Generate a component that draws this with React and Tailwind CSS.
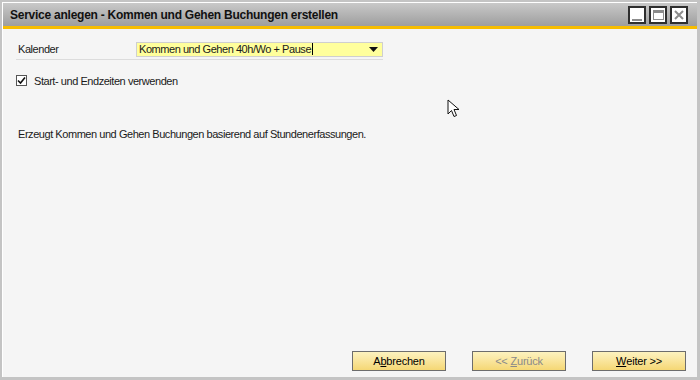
import React from "react";

const font = { fontFamily: '"Liberation Sans", Arial, sans-serif' };

function WinButton({ children }) {
	return (
		<div className="flex h-[18px] w-[18px] items-center justify-center border-2 border-[#2e2e2e] bg-white">
			{children}
		</div>
	);
}

function Button({ children, disabled }) {
	return (
		<button
			type="button"
			className={
				"flex h-[20px] w-[94px] items-center justify-center border border-[#6d6d6d] bg-gradient-to-b from-[#fdf2bf] to-[#f5d774] text-[11px] tracking-[-0.2px] " +
				(disabled ? "text-[#8a8a8a]" : "text-black")
			}>
			{children}
		</button>
	);
}

export default function App() {
	return (
		<div
			className="flex h-[380px] w-[700px] flex-col border-t-2 border-l-2 border-r-[3px] border-b-[3px] border-[#c4c4c4] bg-white"
			style={font}>
			<div className="flex min-h-0 flex-1 flex-col border-t border-l border-white">
				<div className="flex h-[23px] items-center justify-between bg-gradient-to-b from-[#c9c9c9] to-[#9e9e9e] pl-[7px] pr-[9px]">
					<span className="text-[12px] font-bold tracking-[-0.25px] text-[#111]">
						Service anlegen - Kommen und Gehen Buchungen erstellen
					</span>
					<div className="flex gap-[3px] pt-[1px]">
						<WinButton>
							<div className="mt-[9px] h-[2px] w-[10px] bg-[#8c8c8c]" />
						</WinButton>
						<WinButton>
							<div className="h-[10px] w-[11px] border border-t-[3px] border-[#8c8c8c]" />
						</WinButton>
						<WinButton>
							<svg width="10" height="10" viewBox="0 0 10 10">
								<path d="M1 1 L9 9 M9 1 L1 9" stroke="#8c8c8c" strokeWidth="2" />
							</svg>
						</WinButton>
					</div>
				</div>
				<div className="h-[3px] bg-[#f7bd00]" />
				<div className="relative flex min-h-0 flex-1 flex-col bg-[#f5f5f5] text-[11px] tracking-[-0.45px] text-[#1a1a1a]">
					<div className="ml-[13px] mr-[314px] mt-[12px] flex items-center border-b border-[#dcdcdc] pb-[1px]">
						<span className="w-[120px] pl-[2px]">Kalender</span>
						<div className="flex h-[15px] flex-1 items-center justify-between border border-[#cfcfcf] bg-[#ffff9c] pl-[2px] pr-[4px]">
							<span className="flex items-center">
								Kommen und Gehen 40h/Wo + Pause
								<span className="ml-[1px] inline-block h-[12px] w-[1px] bg-black" />
							</span>
							<svg width="9" height="5" viewBox="0 0 9 5">
								<path d="M0 0 H9 L4.5 5 Z" fill="#111" />
							</svg>
						</div>
					</div>
					<div className="ml-[13px] mt-[13px] flex items-center gap-[7px]">
						<div className="flex h-[11px] w-[11px] items-center justify-center border border-[#555] bg-white">
							<svg width="9" height="9" viewBox="0 0 9 9">
								<path d="M1 4.5 L3.5 7 L8 1.5" stroke="#111" strokeWidth="1.6" fill="none" />
							</svg>
						</div>
						<span>Start- und Endzeiten verwenden</span>
					</div>
					<p className="ml-[15px] mt-[37px]">
						Erzeugt Kommen und Gehen Buchungen basierend auf Stundenerfassungen.
					</p>
					<svg
						className="absolute left-[444px] top-[70px]"
						width="14"
						height="20"
						viewBox="0 0 14 20">
						<path
							d="M1 1 L1 15 L4.5 11.5 L7 17.5 L9.5 16.5 L7 10.5 L12 10.5 Z"
							fill="white"
							stroke="#111"
							strokeWidth="1"
						/>
					</svg>
					<div className="mt-auto mb-[6px] flex justify-end gap-[26px] pr-[11px]">
						<Button>
							A<span className="underline">b</span>brechen
						</Button>
						<Button disabled>
							&lt;&lt;&nbsp;<span className="underline">Z</span>urück
						</Button>
						<Button>
							<span className="underline">W</span>eiter &gt;&gt;
						</Button>
					</div>
				</div>
			</div>
		</div>
	);
}
